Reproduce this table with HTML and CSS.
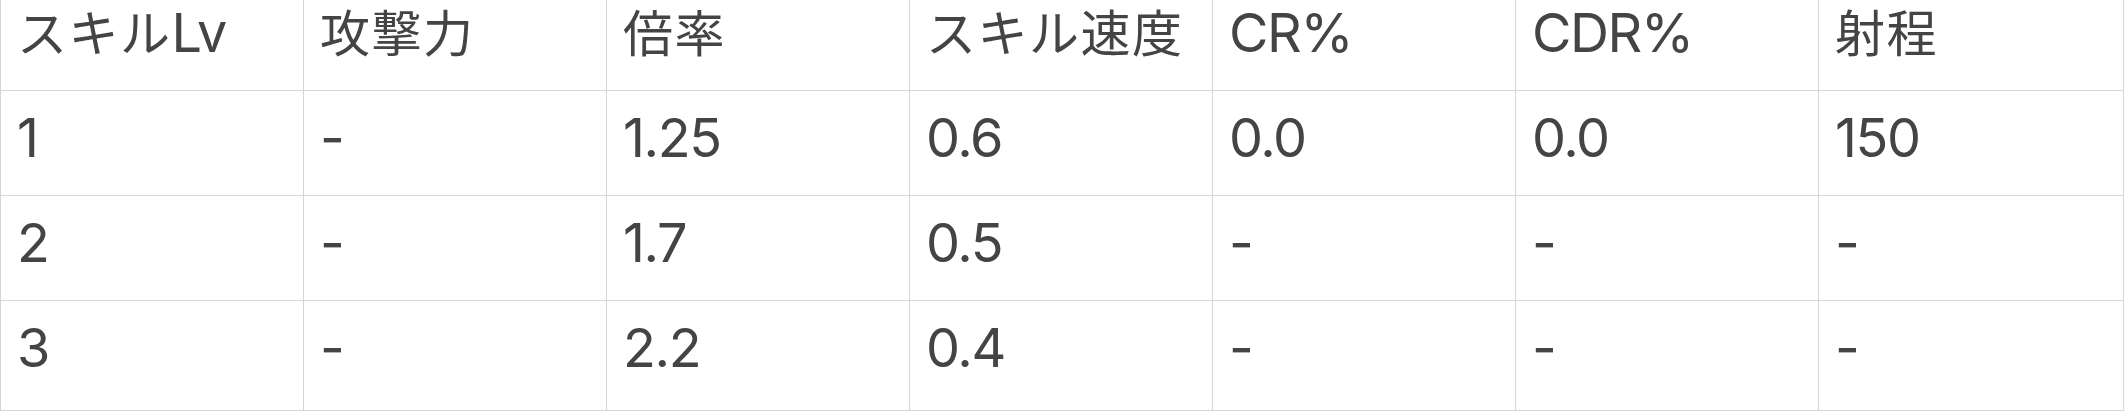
FILE: index.html
```html
<!DOCTYPE html>
<html lang="ja">
<head>
<meta charset="utf-8">
<title>スキル表</title>
<link rel="stylesheet" href="styles.css">
</head>
<body>
<div class="table">
  <div class="cell head"><span class="ja">スキル</span>Lv</div>
  <div class="cell head"><span class="ja">攻撃力</span></div>
  <div class="cell head"><span class="ja">倍率</span></div>
  <div class="cell head"><span class="ja">スキル速度</span></div>
  <div class="cell head">CR%</div>
  <div class="cell head">CDR%</div>
  <div class="cell head last"><span class="ja">射程</span></div>

  <div class="cell">1</div>
  <div class="cell">-</div>
  <div class="cell">1.25</div>
  <div class="cell">0.6</div>
  <div class="cell">0.0</div>
  <div class="cell">0.0</div>
  <div class="cell last">150</div>

  <div class="cell">2</div>
  <div class="cell">-</div>
  <div class="cell">1.7</div>
  <div class="cell">0.5</div>
  <div class="cell">-</div>
  <div class="cell">-</div>
  <div class="cell last">-</div>

  <div class="cell">3</div>
  <div class="cell">-</div>
  <div class="cell">2.2</div>
  <div class="cell">0.4</div>
  <div class="cell">-</div>
  <div class="cell">-</div>
  <div class="cell last">-</div>
</div>
</body>
</html>
```
FILE: styles.css
```css
html, body {
  margin: 0;
  padding: 0;
  background: #ffffff;
}

.table {
  display: grid;
  grid-template-columns: repeat(6, 303px) 306px;
  grid-template-rows: 91px 105px 105px 110px;
  width: 2124px;
  font-family: Inter, "Noto Sans CJK JP", sans-serif;
  font-size: 54px;
  line-height: 65px;
  letter-spacing: -1.4px;
  color: #444444;
}

.cell {
  box-sizing: border-box;
  border-left: 1px solid #d6d6d6;
  border-bottom: 1px solid #d6d6d6;
  padding: 14px 0 0 16px;
  white-space: nowrap;
}

.cell.head {
  padding-top: 6px;
  line-height: 53px;
}

.cell.last {
  border-right: 1px solid #d6d6d6;
}

.ja {
  font-family: "Noto Sans CJK JP", sans-serif;
  font-size: 50px;
  line-height: 40px;
  letter-spacing: 1.5px;
}
```
